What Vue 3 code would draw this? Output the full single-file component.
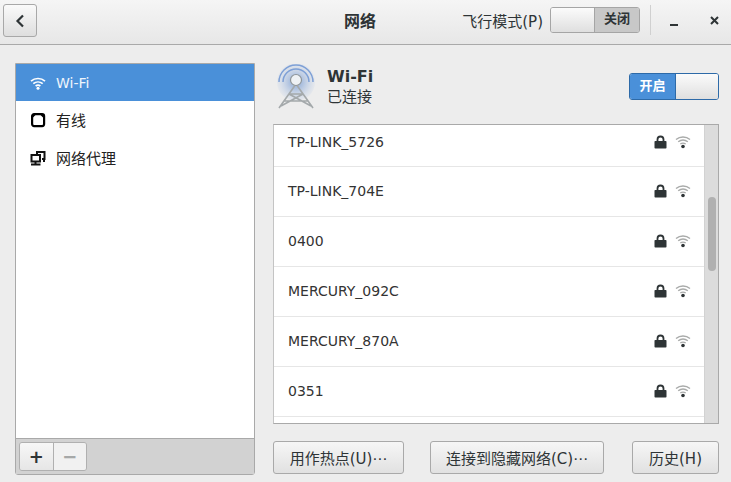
<template>
  <div class="window">
    <header class="header">
      <button class="back">
        <svg width="10" height="14" viewBox="0 0 10 14"><path d="M8 1.5 2.500 7 8 12.500" fill="none" stroke="#2e3436" stroke-width="2.200" /></svg>
      </button>
      <div class="title">网络</div>
      <div class="airplane">
        <span class="airplane-label">飞行模式(P)</span>
        <div class="switch-off">
          <span class="knob"></span>
          <span class="off-text">关闭</span>
        </div>
      </div>
      <span class="divider"></span>
      <div class="win-btn min"><span></span></div>
      <div class="win-btn close">
        <svg width="9" height="9" viewBox="0 0 9 9"><path d="M1 1 8 8M8 1 1 8" stroke="#2e3436" stroke-width="2" /></svg>
      </div>
    </header>

    <main class="content">
      <aside class="sidebar">
        <div class="side-list">
          <div class="side-item active">
            <svg class="side-icon" width="16" height="16" viewBox="0 0 16 16" fill="none" stroke="#fff" stroke-width="1.700">
              <path d="M1 6.200C5 2.600 11 2.600 15 6.200" />
              <path d="M3.300 8.700C6 6.400 10 6.400 12.700 8.700" />
              <path d="M5.600 11C7 10 9 10 10.400 11" />
              <circle cx="8" cy="13.300" r="1.500" fill="#fff" stroke="none" />
            </svg>
            <span class="latin">Wi-Fi</span>
          </div>
          <div class="side-item">
            <svg class="side-icon" width="16" height="16" viewBox="0 0 16 16">
              <rect x="2.100" y="2.100" width="12" height="12" rx="2" fill="none" stroke="#000" stroke-width="2.200" />
              <path d="M3 3h2.500L3 5.500ZM13 3h-2.500L13 5.500Z" fill="#000" />
            </svg>
            <span class="side-label">有线</span>
          </div>
          <div class="side-item">
            <svg class="side-icon" width="16" height="16" viewBox="0 0 16 16" fill="none" stroke="#111" stroke-width="2">
              <path d="M7 4V2h7.500v7H12" />
              <rect x="1.500" y="5" width="8.500" height="6.500" />
              <path d="M1 14.500h9.500" />
              <path d="M5.500 11.500v3" />
              <path d="M13 11h2" />
            </svg>
            <span class="side-label">网络代理</span>
          </div>
        </div>
        <div class="side-toolbar">
          <div class="tool-group">
            <button class="tool-btn plus">+</button>
            <button class="tool-btn minus">−</button>
          </div>
        </div>
      </aside>

      <section class="panel">
        <div class="panel-head">
          <svg class="tower" width="42" height="46" viewBox="0 0 42 46" fill="none">
            <defs>
              <radialGradient id="glow">
                <stop offset="0.300" stop-color="#6f96d2" stop-opacity="0.900" />
                <stop offset="1" stop-color="#a9c0e4" stop-opacity="0.200" />
              </radialGradient>
            </defs>
            <circle cx="21" cy="18" r="19" fill="url(#glow)" opacity="0.600" />
            <path d="M4 18a17 17 0 0 1 34 0M8 18a13 13 0 0 1 26 0" stroke="#7ea0d6" stroke-width="1.500" />
            <path d="M21 20 4 44M21 20l17 24M9 37h24M14 30h14M6 42l22-12M36 42 14 30" stroke="#a4a9ab" stroke-width="1.600" />
            <circle cx="21" cy="16" r="5.500" fill="#eef1f4" stroke="#8e9599" stroke-width="1.200" />
          </svg>
          <div class="head-text">
            <div class="head-name">Wi-Fi</div>
            <div class="head-status">已连接</div>
          </div>
          <div class="switch-on">
            <span class="on-text">开启</span>
            <span class="knob-on"></span>
          </div>
        </div>

        <div class="networks">
          <div class="net-scroll">
            <div v-for="net in networks" :key="net" class="net-row">
              <span class="net-name">{{ net }}</span>
              <svg class="lock" width="13" height="14" viewBox="0 0 13 14">
                <path d="M3.500 7V4.500a3 3 0 0 1 6 0V7" fill="none" stroke="#2e3436" stroke-width="1.800" />
                <rect x="0.500" y="6" width="12" height="7.500" rx="0.800" fill="#2e3436" />
              </svg>
              <svg class="signal" width="16" height="14" viewBox="0 0 16 14" fill="none" stroke="#a9abaa" stroke-width="1.400">
                <path d="M1 4.500C5 1.200 11 1.200 15 4.500" />
                <path d="M3.200 6.800C6 4.700 10 4.700 12.800 6.800" />
                <path d="M5.300 9C7 7.900 9 7.900 10.700 9" />
                <circle cx="8" cy="11.500" r="1.800" fill="#2e3436" stroke="none" />
              </svg>
            </div>
          </div>
          <div class="scrollbar"><span class="thumb"></span></div>
        </div>

        <div class="actions">
          <button class="action">用作热点(U)⋯</button>
          <button class="action hidden-net">连接到隐藏网络(C)⋯</button>
          <button class="action history">历史(H)</button>
        </div>
      </section>
    </main>
  </div>
</template>

<script setup>
const networks = ['TP-LINK_5726', 'TP-LINK_704E', '0400', 'MERCURY_092C', 'MERCURY_870A', '0351']
</script>

<style>
html, body {
  margin: 0;
  background: #ededed;
}
</style>

<style scoped>
* {
  box-sizing: border-box;
}
.window {
  width: 731px;
  height: 482px;
  overflow: hidden;
  background: #ededed;
  color: #2e3436;
  font-family: "DejaVu Sans", "Noto Sans CJK SC", sans-serif;
  font-size: 14px;
}
button {
  font-family: inherit;
  color: inherit;
}
.header {
  height: 45px;
  display: flex;
  align-items: center;
  padding: 4px 0 8px 3px;
  background: linear-gradient(#f5f5f5, #e7e7e7);
  border-bottom: 1px solid #a9a9a9;
  position: relative;
}
.back {
  width: 34px;
  height: 33px;
  margin-top: 1px;
  padding: 0;
  display: flex;
  align-items: center;
  justify-content: center;
  border: 1px solid #a8a8a8;
  border-radius: 3px;
  background: linear-gradient(#fafafa, #dedede);
}
.title {
  position: absolute;
  left: 344px;
  top: 8px;
  font-size: 16px;
  font-weight: 700;
}
.airplane {
  margin-left: auto;
  display: flex;
  align-items: center;
  gap: 7px;
}
.airplane-label {
  font-size: 15px;
  color: #2e3436;
}
.switch-off {
  width: 90px;
  height: 26px;
  display: flex;
  border: 1px solid #a5a5a5;
  border-radius: 3px;
  overflow: hidden;
}
.knob {
  width: 44px;
  background: linear-gradient(#fbfbfb, #dfdfdf);
  border-right: 1px solid #a5a5a5;
}
.off-text {
  flex: 1;
  background: #c8c8c8;
  font-size: 13px;
  font-weight: 700;
  text-align: center;
  line-height: 22px;
}
.divider {
  width: 1px;
  height: 30px;
  margin: 0 0 0 10px;
  background: #d0d0d0;
}
.win-btn {
  display: flex;
  align-items: center;
  justify-content: center;
}
.min {
  width: 8px;
  margin-left: 19px;
}
.min span {
  width: 8px;
  height: 2px;
  margin-top: 9px;
  background: #2e3436;
}
.close {
  margin: 0 12px 0 32px;
}
.content {
  height: 437px;
  display: flex;
  padding: 18px 12px 7px 15px;
  gap: 18px;
}
.sidebar {
  width: 240px;
  display: flex;
  flex-direction: column;
  border: 1px solid #a9a9a9;
  border-radius: 0 0 3px 3px;
}
.side-list {
  flex: 1;
  background: #fff;
}
.side-item {
  height: 38px;
  display: flex;
  align-items: center;
  gap: 10px;
  padding-left: 14px;
  font-size: 15px;
  color: #222;
}
.side-item.active {
  height: 37px;
  background: #4a90d9;
  color: #eef5fc;
}
.side-label {
  margin-top: -2px;
}
.latin {
  font-size: 14px;
}
.side-toolbar {
  height: 36px;
  padding: 3px;
  background: #d2d2d2;
  border-top: 1px solid #a9a9a9;
}
.tool-group {
  width: 68px;
  height: 29px;
  display: flex;
  border: 1px solid #b0b0b0;
  border-radius: 3px;
  overflow: hidden;
}
.tool-btn {
  flex: 1;
  padding: 0;
  border: 0;
  font-size: 18px;
  font-weight: 700;
  line-height: 24px;
  background: linear-gradient(#f7f7f7, #e6e6e6);
}
.plus {
  border-right: 1px solid #b0b0b0;
}
.minus {
  color: #a6a8a8;
  background: #f1f1f1;
}
.panel {
  width: 446px;
  display: flex;
  flex-direction: column;
}
.panel-head {
  height: 61px;
  display: flex;
  align-items: flex-start;
}
.tower {
  margin: 1px 10px 0 2px;
  flex-shrink: 0;
}
.head-text {
  padding-top: 4px;
}
.head-name {
  font-size: 16px;
  font-weight: 700;
  line-height: 20px;
}
.head-status {
  font-size: 15px;
  line-height: 21px;
}
.switch-on {
  margin: 10px 0 0 auto;
  width: 90px;
  height: 27px;
  display: flex;
  border: 1px solid #2d6aa8;
  border-radius: 3px;
  overflow: hidden;
}
.on-text {
  width: 45px;
  background: #4a90d9;
  color: #fff;
  font-size: 13px;
  font-weight: 700;
  text-align: center;
  line-height: 24px;
}
.knob-on {
  flex: 1;
  background: linear-gradient(#fbfbfb, #dfdfdf);
  border-left: 1px solid #2d6aa8;
}
.networks {
  height: 300px;
  display: flex;
  background: #fff;
  border: 1px solid #a9a9a9;
  border-left: 1px solid #c4c4c4;
  overflow: hidden;
}
.net-scroll {
  flex: 1;
  min-width: 0;
}
.net-row {
  height: 50px;
  display: flex;
  align-items: center;
  padding: 0 14px 1px;
  border-bottom: 1px solid #e6e6e6;
}
.net-row:first-child {
  height: 42px;
  padding-bottom: 8px;
}
.net-name {
  flex: 1;
  font-size: 14px;
  color: #333;
}
.lock {
  margin-right: 8px;
}
.signal {
  margin-right: -1px;
}
.scrollbar {
  width: 14px;
  background: #dcdcdc;
  border-left: 1px solid #d2d2d2;
  position: relative;
}
.thumb {
  position: absolute;
  left: 3px;
  top: 72px;
  width: 8px;
  height: 74px;
  border-radius: 4px;
  background: #b0b0b0;
}
.actions {
  margin-top: auto;
  margin-bottom: 1px;
  display: flex;
  align-items: flex-end;
}
.action {
  height: 33px;
  padding: 0;
  border: 1px solid #a9a9a9;
  border-radius: 3px;
  background: linear-gradient(#f6f6f6, #e1e1e1);
  font-size: 15px;
  width: 131px;
}
.hidden-net {
  width: 174px;
  margin-left: 26px;
}
.history {
  width: 87px;
  margin-left: 28px;
}
</style>
